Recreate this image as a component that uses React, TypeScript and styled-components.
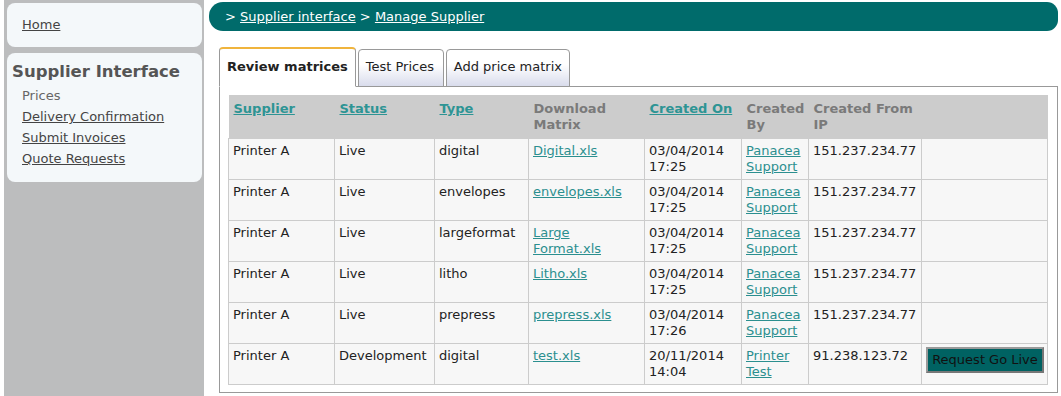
import React from "react";
import styled, { createGlobalStyle } from "styled-components";

const GlobalStyle = createGlobalStyle`
  html, body {
    margin: 0;
    padding: 0;
    background: #fff;
    font-family: "DejaVu Sans", Verdana, sans-serif;
    font-size: 13px;
    color: #222;
  }
`;

type Matrix = {
  supplier: string;
  status: string;
  type: string;
  file: string[];
  created: string[];
  by: string[];
  ip: string;
  canGoLive?: boolean;
};

const matrices: Matrix[] = [
  { supplier: "Printer A", status: "Live", type: "digital", file: ["Digital.xls"], created: ["03/04/2014", "17:25"], by: ["Panacea", "Support"], ip: "151.237.234.77" },
  { supplier: "Printer A", status: "Live", type: "envelopes", file: ["envelopes.xls"], created: ["03/04/2014", "17:25"], by: ["Panacea", "Support"], ip: "151.237.234.77" },
  { supplier: "Printer A", status: "Live", type: "largeformat", file: ["Large", "Format.xls"], created: ["03/04/2014", "17:25"], by: ["Panacea", "Support"], ip: "151.237.234.77" },
  { supplier: "Printer A", status: "Live", type: "litho", file: ["Litho.xls"], created: ["03/04/2014", "17:25"], by: ["Panacea", "Support"], ip: "151.237.234.77" },
  { supplier: "Printer A", status: "Live", type: "prepress", file: ["prepress.xls"], created: ["03/04/2014", "17:26"], by: ["Panacea", "Support"], ip: "151.237.234.77" },
  { supplier: "Printer A", status: "Development", type: "digital", file: ["test.xls"], created: ["20/11/2014", "14:04"], by: ["Printer", "Test"], ip: "91.238.123.72", canGoLive: true },
];

const columns = [
  { label: ["Supplier"], link: true, width: 106 },
  { label: ["Status"], link: true, width: 100 },
  { label: ["Type"], link: true, width: 94 },
  { label: ["Download", "Matrix"], link: false, width: 116 },
  { label: ["Created On"], link: true, width: 97 },
  { label: ["Created", "By"], link: false, width: 67 },
  { label: ["Created From", "IP"], link: false, width: 113 },
  { label: [], link: false, width: 126 },
];

const lines = (parts: string[]) =>
  parts.map((p, i) => (
    <React.Fragment key={i}>
      {i > 0 && <br />}
      {p}
    </React.Fragment>
  ));

export default function App() {
  return (
    <>
      <GlobalStyle />
      <Page>
        <Sidebar>
          <SideBox $height={44}>
            <HomeLink href="#">Home</HomeLink>
          </SideBox>
          <SideBox $height={129}>
            <SideTitle>Supplier Interface</SideTitle>
            <SideList>
              <SideItem>Prices</SideItem>
              <SideItem>
                <SideLink href="#">Delivery Confirmation</SideLink>
              </SideItem>
              <SideItem>
                <SideLink href="#">Submit Invoices</SideLink>
              </SideItem>
              <SideItem>
                <SideLink href="#">Quote Requests</SideLink>
              </SideItem>
            </SideList>
          </SideBox>
        </Sidebar>

        <Main>
          <Breadcrumb>
            &gt; <CrumbLink href="#">Supplier interface</CrumbLink> &gt;{" "}
            <CrumbLink href="#">Manage Supplier</CrumbLink>
          </Breadcrumb>

          <Tabs>
            <Tab $active>Review matrices</Tab>
            <Tab>Test Prices</Tab>
            <Tab>Add price matrix</Tab>
          </Tabs>

          <Panel>
            <Table>
              <colgroup>
                {columns.map((c, i) => (
                  <col key={i} style={{ width: c.width }} />
                ))}
              </colgroup>
              <thead>
                <tr>
                  {columns.map((c, i) => (
                    <Th key={i}>
                      {c.link ? <HeadLink href="#">{lines(c.label)}</HeadLink> : lines(c.label)}
                    </Th>
                  ))}
                </tr>
              </thead>
              <tbody>
                {matrices.map((m, i) => (
                  <tr key={i}>
                    <Td>{m.supplier}</Td>
                    <Td>{m.status}</Td>
                    <Td>{m.type}</Td>
                    <Td>
                      <CellLink href="#">{lines(m.file)}</CellLink>
                    </Td>
                    <Td>{lines(m.created)}</Td>
                    <Td>
                      <CellLink href="#">{lines(m.by)}</CellLink>
                    </Td>
                    <Td>{m.ip}</Td>
                    <Td $action>{m.canGoLive && <GoLiveButton>Request Go Live</GoLiveButton>}</Td>
                  </tr>
                ))}
              </tbody>
            </Table>
          </Panel>
        </Main>
      </Page>
    </>
  );
}

const Page = styled.div`
  display: flex;
  align-items: stretch;
  min-height: 396px;
`;

const Sidebar = styled.div`
  width: 195px;
  margin-left: 4px;
  padding: 3px 2px 0 3px;
  background: #bcbdbe;
  display: flex;
  flex-direction: column;
  gap: 6px;
`;

const SideBox = styled.div<{ $height: number }>`
  height: ${(p) => p.$height}px;
  box-sizing: border-box;
  background: #f4f8fa;
  border-radius: 8px;
  padding: 5px 0 0 5px;
`;

const HomeLink = styled.a`
  display: block;
  margin: 9px 0 0 10px;
  color: #444;
  line-height: 16px;
`;

const SideTitle = styled.div`
  font-size: 16.5px;
  font-weight: bold;
  color: #555;
  line-height: 20px;
  margin-top: 4px;
`;

const SideList = styled.ul`
  list-style: none;
  margin: 3px 0 0 10px;
  padding: 0;
`;

const SideItem = styled.li`
  line-height: 21px;
  color: #666;
`;

const SideLink = styled.a`
  color: #444;
`;

const Main = styled.div`
  flex: 1;
  margin: 2px 3px 0 5px;
  display: flex;
  flex-direction: column;
`;

const Breadcrumb = styled.div`
  height: 29px;
  line-height: 30px;
  background: #006b6b;
  border-radius: 14px 11px 11px 14px;
  color: #fff;
  padding-left: 16px;
`;

const CrumbLink = styled.a`
  color: #fff;
`;

const Tabs = styled.div`
  display: flex;
  align-items: flex-end;
  gap: 2px;
  margin: 16px 0 0 10px;
  position: relative;
  z-index: 1;
  margin-bottom: -1px;
`;

const Tab = styled.div<{ $active?: boolean }>`
  box-sizing: border-box;
  height: ${(p) => (p.$active ? 40 : 38)}px;
  padding: ${(p) => (p.$active ? "10px 7px 0 7px" : "9px 7px 0 7px")};
  min-width: ${(p) => (p.$active ? 0 : 86)}px;
  border: 1px solid #999;
  border-bottom: ${(p) => (p.$active ? "1px solid #fff" : "1px solid #999")};
  border-top: ${(p) => (p.$active ? "2px solid #f0b43c" : "1px solid #999")};
  border-radius: 4px 4px 0 0;
  background: ${(p) => (p.$active ? "#fff" : "linear-gradient(#fff 40%, #d9dcec)")};
  font-weight: ${(p) => (p.$active ? "bold" : "normal")};
  color: #222;
  line-height: 16px;
  white-space: nowrap;
`;

const Panel = styled.div`
  margin-left: 10px;
  border: 1px solid #999;
  padding: 8px;
  height: 307px;
  box-sizing: border-box;
`;

const Table = styled.table`
  width: 819px;
  border-collapse: collapse;
  table-layout: fixed;
`;

const Th = styled.th`
  background: #cccccc;
  color: #7a7a7a;
  font-weight: bold;
  text-align: left;
  vertical-align: top;
  padding: 6px 5px 4px 5px;
  height: 43px;
  box-sizing: border-box;
  line-height: 16px;
`;

const HeadLink = styled.a`
  color: #2d9494;
`;

const Td = styled.td<{ $action?: boolean }>`
  background: #f7f7f7;
  border: 1px solid #ccc;
  vertical-align: top;
  padding: ${(p) => (p.$action ? "3px 3px 0 4px" : "4px 4px 0 4px")};
  height: 41px;
  box-sizing: border-box;
  line-height: 16px;
  color: #222;
  white-space: nowrap;
`;

const CellLink = styled.a`
  color: #2b8f8f;
`;

const GoLiveButton = styled.button`
  font-family: "DejaVu Sans", Verdana, sans-serif;
  font-size: 13px;
  background: #006262;
  color: #111;
  border: 2px solid #9a9a9a;
  border-right-color: #777;
  border-bottom-color: #777;
  padding: 3px 2px;
  width: 118px;
  height: 26px;
  cursor: pointer;
`;
